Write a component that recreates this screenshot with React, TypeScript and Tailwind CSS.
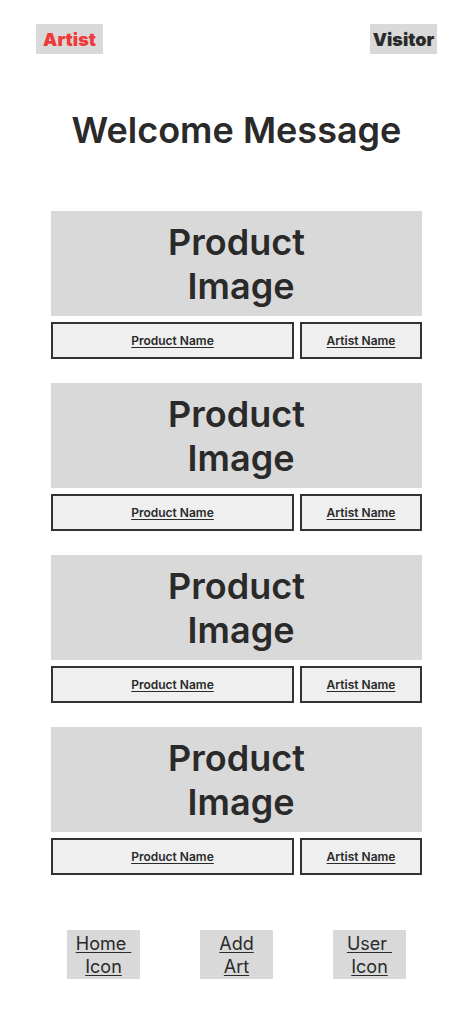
const products = [1, 2, 3, 4];

function ProductCard() {
  return (
    <div className="flex flex-col gap-[6px]">
      <div className="flex h-[105px] items-center justify-center bg-[#d9d9d9]">
        <p className="text-center text-[36px] font-semibold leading-[44px] text-[#2a2a2a]">
          Product
          <br />
          {'\u00a0'}Image
        </p>
      </div>
      <div className="flex h-[37px] gap-[6px]">
        <a
          href="#"
          className="flex flex-1 items-center justify-center border-2 border-[#333] bg-[#efefef] text-[12px] font-semibold text-[#2a2a2a] underline underline-offset-2"
        >
          Product Name
        </a>
        <a
          href="#"
          className="flex w-[122px] items-center justify-center border-2 border-[#333] bg-[#efefef] text-[12px] font-semibold text-[#2a2a2a] underline underline-offset-2"
        >
          Artist Name
        </a>
      </div>
    </div>
  );
}

export default function App() {
  return (
    <div className="flex min-h-[1024px] w-[473px] flex-col bg-white font-['Inter',sans-serif]">
      {/* Top toggle */}
      <header className="flex items-center justify-between px-[36px] pt-6">
        <button className="flex h-[30px] w-[67px] items-center justify-center bg-[#d9d9d9] text-[18px] font-black text-[#f03a3a]">
          Artist
        </button>
        <button className="flex h-[30px] w-[67px] items-center justify-center bg-[#d9d9d9] text-[18px] font-black text-[#2a2a2a]">
          Visitor
        </button>
      </header>

      <h1 className="mt-[54px] text-center text-[36px] font-semibold leading-[44px] text-[#2a2a2a]">
        Welcome Message
      </h1>

      {/* Product list */}
      <main className="mt-[59px] flex flex-col gap-6 px-[51px]">
        {products.map((p) => (
          <ProductCard key={p} />
        ))}
      </main>

      {/* Bottom nav */}
      <nav className="mt-[55px] flex justify-center gap-[60px]">
        <a href="#" className="flex h-[49px] w-[73px] items-center justify-center bg-[#d9d9d9] text-center text-[18px] leading-[23px] text-[#2a2a2a] underline underline-offset-2">
          <span>
            Home{'\u00a0'}
            <br />
            Icon
          </span>
        </a>
        <a href="#" className="flex h-[49px] w-[73px] items-center justify-center bg-[#d9d9d9] text-center text-[18px] leading-[23px] text-[#2a2a2a] underline underline-offset-2">
          <span>
            Add
            <br />
            Art
          </span>
        </a>
        <a href="#" className="flex h-[49px] w-[73px] items-center justify-center bg-[#d9d9d9] text-center text-[18px] leading-[23px] text-[#2a2a2a] underline underline-offset-2">
          <span>
            User{'\u00a0'}
            <br />
            Icon
          </span>
        </a>
      </nav>
    </div>
  );
}
